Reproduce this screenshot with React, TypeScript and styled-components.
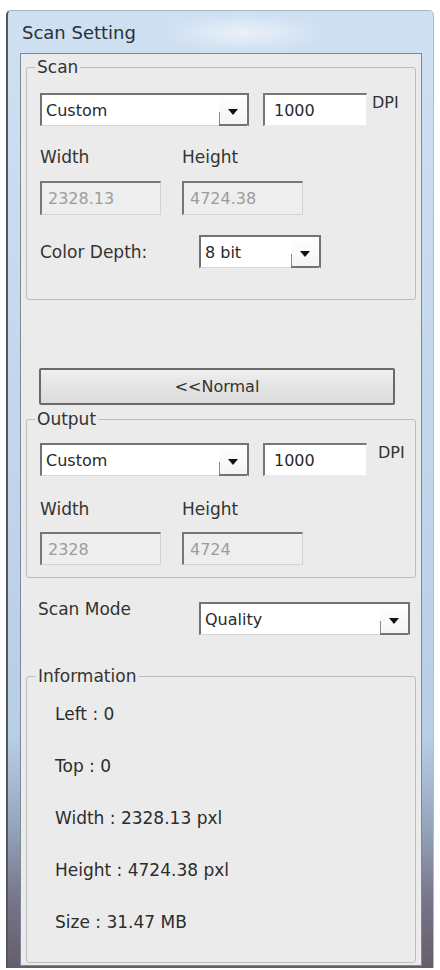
import React from "react";
import styled, { createGlobalStyle } from "styled-components";

const GlobalStyle = createGlobalStyle`
  html, body { margin: 0; padding: 0; background: #ffffff; overflow: hidden; }
  body { font-family: "DejaVu Sans", Tahoma, sans-serif; color: #333333; }
`;

const Page = styled.div`
  padding: 10px 0 0 6px;
`;

const Window = styled.div`
  width: 428px;
  box-sizing: border-box;
  border-left: 2px solid #4f5761;
  border-top: 1px solid #a3b8cd;
  border-right: 1px solid #aabdd2;
  border-radius: 5px 5px 0 0;
  padding: 0 11px 2px 12px;
  background:
    radial-gradient(ellipse 110px 26px at 235px 22px, rgba(255, 255, 255, 0.55), rgba(255, 255, 255, 0) 75%),
    linear-gradient(180deg, #cfe0f2 0%, #c3d7ec 40%, #b8cee6 76%, #95a6bd 85%, #777488 93%, #655d6b 100%);
`;

const TitleBar = styled.div`
  height: 42px;
  display: flex;
  align-items: center;
  padding-left: 2px;
  font-size: 18px;
  color: #2c3036;
`;

const Client = styled.div`
  background: #ebebeb;
  border: 1px solid #7b8999;
  padding-bottom: 2px;
`;

const Group = styled.fieldset<{ $top: number; $pt: number; $pb: number; $pl: number }>`
  margin: ${(p) => p.$top}px 5px 0;
  padding: ${(p) => p.$pt}px 0 ${(p) => p.$pb}px ${(p) => p.$pl}px;
  border: 1px solid #bdbdbd;
  border-radius: 3px;
  min-width: 0;
`;

const Legend = styled.legend<{ $shift: number }>`
  margin-left: ${(p) => p.$shift}px;
  padding: 0 2px;
  font-size: 17px;
  line-height: 20px;
  color: #333333;
`;

const Row = styled.div<{ $mt?: number; $align?: string }>`
  display: flex;
  align-items: ${(p) => p.$align || "flex-start"};
  margin-top: ${(p) => p.$mt || 0}px;
`;

const Label = styled.div<{ $w?: number; $mt?: number }>`
  width: ${(p) => (p.$w ? `${p.$w}px` : "auto")};
  margin-top: ${(p) => p.$mt || 0}px;
  flex-shrink: 0;
  font-size: 17px;
  line-height: 20px;
  color: #333333;
`;

const ComboBox = styled.div<{ $w: number }>`
  width: ${(p) => p.$w}px;
  height: 33px;
  box-sizing: border-box;
  display: flex;
  background: #ffffff;
  border-top: 2px solid #727272;
  border-left: 2px solid #727272;
  border-right: 2px solid #727272;
  border-bottom: 1px solid #d6d6d6;
  flex-shrink: 0;
`;

const ComboText = styled.div`
  flex: 1;
  display: flex;
  align-items: center;
  padding-left: 4px;
  font-size: 16px;
  color: #2a2a2a;
`;

const ComboButton = styled.div`
  width: 28px;
  display: flex;
  align-items: center;
  justify-content: center;
  background:
    linear-gradient(180deg, rgba(255, 255, 255, 0) 55%, #8a8a8a 55%) left / 1px 100% no-repeat,
    linear-gradient(180deg, #ffffff 0%, #f3f3f3 100%);
  box-shadow: inset 0 -2px 0 #727272;
  margin-bottom: -1px;
`;

const Arrow = styled.span`
  width: 0;
  height: 0;
  border-left: 5px solid transparent;
  border-right: 5px solid transparent;
  border-top: 6px solid #111111;
  margin-top: 2px;
`;

const EditBox = styled.div<{ $w: number; $h?: number; $disabled?: boolean }>`
  width: ${(p) => p.$w}px;
  height: ${(p) => p.$h || 33}px;
  box-sizing: border-box;
  display: flex;
  align-items: center;
  flex-shrink: 0;
  padding-left: ${(p) => (p.$disabled ? 6 : 9)}px;
  font-size: 16px;
  background: ${(p) => (p.$disabled ? "#eeeeee" : "#ffffff")};
  color: ${(p) => (p.$disabled ? "#9c9c9c" : "#2a2a2a")};
  border-top: 2px solid #777777;
  border-left: 2px solid #777777;
  border-right: 1px solid ${(p) => (p.$disabled ? "#d2d2d2" : "#ececec")};
  border-bottom: 1px solid ${(p) => (p.$disabled ? "#d2d2d2" : "#ececec")};
`;

const Unit = styled.div<{ $ml: number }>`
  margin-left: ${(p) => p.$ml}px;
  font-size: 16px;
  line-height: 20px;
  color: #333333;
`;

const NormalButton = styled.div`
  margin: 68px 0 0 18px;
  width: 356px;
  height: 37px;
  box-sizing: border-box;
  display: flex;
  align-items: center;
  justify-content: center;
  border: 2px solid #6a6a6a;
  border-radius: 2px;
  background: linear-gradient(180deg, #f0f0f0 0%, #e3e3e3 50%, #dcdcdc 100%);
  font-size: 16px;
  color: #333333;
`;

const InfoLine = styled.div`
  height: 52px;
  display: flex;
  align-items: center;
  font-size: 17px;
  color: #2c2c2c;
`;

function Combo({ w, value }: { w: number; value: string }) {
  return (
    <ComboBox $w={w}>
      <ComboText>{value}</ComboText>
      <ComboButton>
        <Arrow />
      </ComboButton>
    </ComboBox>
  );
}

export default function App() {
  const info = ["Left : 0", "Top : 0", "Width : 2328.13 pxl", "Height : 4724.38 pxl", "Size : 31.47 MB"];
  return (
    <>
      <GlobalStyle />
      <Page>
        <Window>
          <TitleBar>Scan Setting</TitleBar>
          <Client>
            <Group $top={3} $pt={16} $pb={31} $pl={13}>
              <Legend $shift={-5}>Scan</Legend>
              <Row>
                <Combo w={209} value="Custom" />
                <EditBox $w={104} style={{ marginLeft: 14 }}>1000</EditBox>
                <Unit $ml={5}>DPI</Unit>
              </Row>
              <Row $mt={21}>
                <Label $w={142}>Width</Label>
                <Label>Height</Label>
              </Row>
              <Row $mt={14}>
                <EditBox $w={121} $h={34} $disabled>2328.13</EditBox>
                <EditBox $w={121} $h={34} $disabled style={{ marginLeft: 21 }}>4724.38</EditBox>
              </Row>
              <Row $mt={20} $align="center">
                <Label $w={159}>Color Depth:</Label>
                <Combo w={122} value="8 bit" />
              </Row>
            </Group>

            <NormalButton>&lt;&lt;Normal</NormalButton>

            <Group $top={4} $pt={14} $pb={12} $pl={13}>
              <Legend $shift={-5}>Output</Legend>
              <Row>
                <Combo w={209} value="Custom" />
                <EditBox $w={104} style={{ marginLeft: 14 }}>1000</EditBox>
                <Unit $ml={11}>DPI</Unit>
              </Row>
              <Row $mt={23}>
                <Label $w={142}>Width</Label>
                <Label>Height</Label>
              </Row>
              <Row $mt={13}>
                <EditBox $w={121} $disabled>2328</EditBox>
                <EditBox $w={121} $disabled style={{ marginLeft: 21 }}>4724</EditBox>
              </Row>
            </Group>

            <Row $mt={24} style={{ marginLeft: 17 }}>
              <Label $w={161} $mt={-3}>Scan Mode</Label>
              <Combo w={211} value="Quality" />
            </Row>

            <Group $top={31} $pt={2} $pb={14} $pl={28}>
              <Legend $shift={-19}>Information</Legend>
              {info.map((t) => (
                <InfoLine key={t}>{t}</InfoLine>
              ))}
            </Group>
          </Client>
        </Window>
      </Page>
    </>
  );
}
